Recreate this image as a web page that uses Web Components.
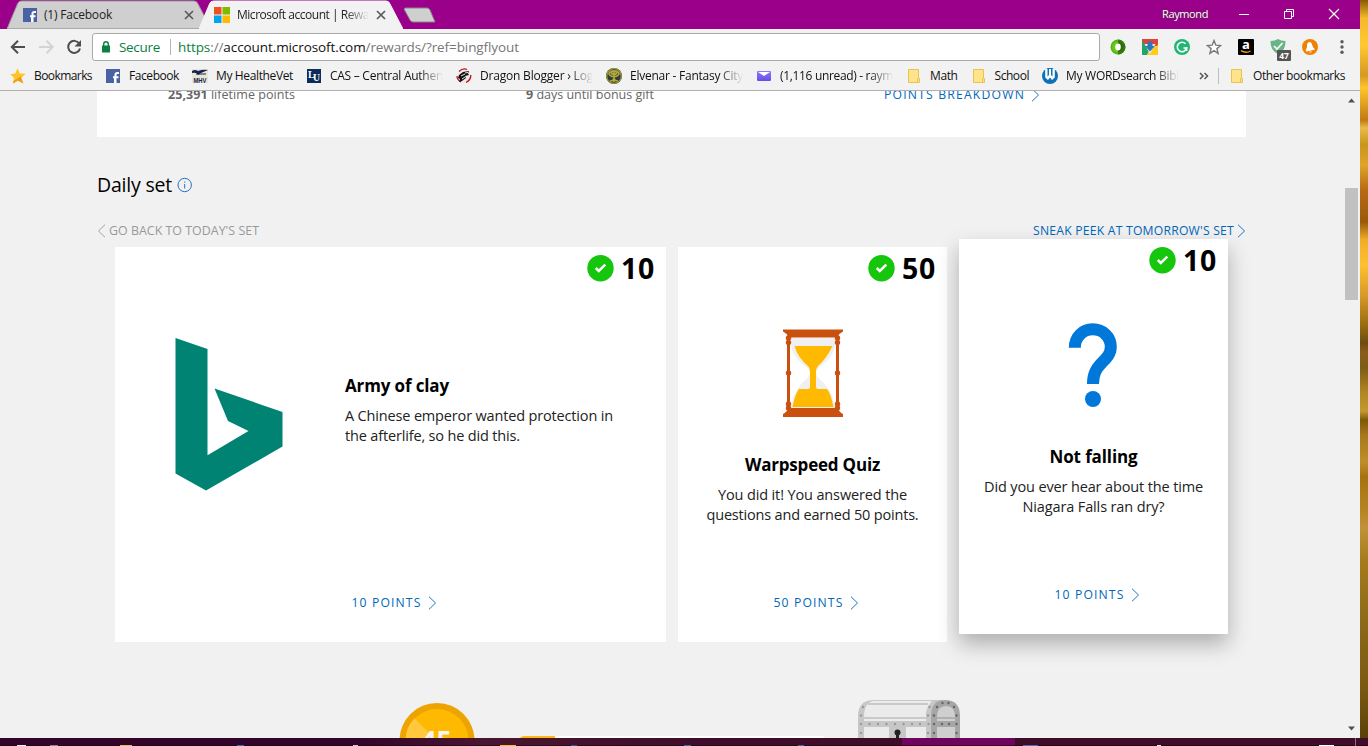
<!DOCTYPE html>
<html lang="en">
<head>
<meta charset="utf-8">
<title>Microsoft account | Rewards</title>
<style>
  html, body { margin: 0; height: 100%; overflow: hidden; }
  body { font-family: "Open Sans", "Noto Sans", sans-serif; background: #f1f1f1; }
</style>
</head>
<body>
<desktop-screen></desktop-screen>

<script>
const icons = {
  facebook: `<svg width="16" height="16" viewBox="0 0 16 16"><rect x="1" y="1" width="14" height="14" fill="#4862a3"/><path d="M10 15V9.500M14 5h-1.800q-1.700 0-1.700 1.800V15M8 9.300h5.500" fill="none" stroke="#fff" stroke-width="2"/></svg>`,
  microsoft: `<svg width="16" height="16" viewBox="0 0 16 16"><path fill="#f25022" d="M0 0h7.500v7.500H0z"/><path fill="#7fba00" d="M8.500 0H16v7.500H8.500z"/><path fill="#00a4ef" d="M0 8.500h7.500V16H0z"/><path fill="#ffb900" d="M8.500 8.500H16V16H8.500z"/></svg>`,
  star: `<svg width="16" height="16" viewBox="0 0 16 16"><path d="M7.500.3 9.700 5.500l6 .3-4.500 4 2.200 5.800-5.400-3.200L3 15.500l1-5.600L.3 6.300l5-.8z" fill="#fdc529"/><path d="M11 8l.2 2 2.200 5.600L8 12.400 3 15.500l.5-2.500 4.200-2.500z" fill="#f39a19"/></svg>`,
  mhv: `<svg width="16" height="16" viewBox="0 0 16 16"><rect y="1" width="16" height="14" fill="#e9e5d6"/><path d="M0 3q3-2 6 0 5-2 10-1L9 5 6 7Q5 4 0 5z" fill="#16234f"/><path d="M4 6h10" stroke="#16234f"/><text x="8" y="14.500" text-anchor="middle" textLength="13" lengthAdjust="spacingAndGlyphs" font-family="Liberation Sans" font-weight="700" font-size="6.500" fill="#16234f">MHV</text></svg>`,
  lu: `<svg width="16" height="16" viewBox="0 0 16 16"><rect x="1" y="1" width="14" height="14" fill="#0a2d5c"/><text x="2" y="10" font-family="Liberation Serif" font-weight="700" font-size="10" fill="#fff">L</text><text x="7" y="13" font-family="Liberation Serif" font-weight="700" font-size="10" textLength="7" lengthAdjust="spacingAndGlyphs" fill="#fff">U</text></svg>`,
  dragon: `<svg width="16" height="16" viewBox="0 0 16 16"><circle cx="8" cy="8" r="7" fill="#eceaea"/><path d="M3 3.500Q7-.5 11 1.500M14.800 7Q15 12 10 14.500M1 8q0 4 4 6" fill="none" stroke="#c2131d" stroke-width="1.300"/><path d="M3 7l4-3 6-1-1 2.500 1 1.500-4 1 1 2-4 3-3 1 1-3-2-1z" fill="#171013"/><path d="M5 8l4-2M6 11l3-2M9 5l3-.5" stroke="#eceaea"/></svg>`,
  tree: `<svg width="16" height="16" viewBox="0 0 16 16"><circle cx="8" cy="8" r="8" fill="#303c3c"/><path d="M8 3v11M8 9Q3 8 3 5M8 9q5-1 5-4M8 7Q5 6 5.500 3M8 7q3-1 2.500-4M8 11q-1 2-4 2M8 11q1 2 4 2M3 5q5-4 10 0" fill="none" stroke="#b4a83c" stroke-width="1.700"/><circle cx="8" cy="8" r="7.300" fill="none" stroke="#a39b3b" stroke-width="1.200"/></svg>`,
  mail: `<svg width="16" height="16" viewBox="0 0 16 16"><defs><linearGradient id="m" x2="0" y2="1"><stop stop-color="#8a7df5"/><stop offset="1" stop-color="#654be9"/></linearGradient></defs><rect x="1" y="3" width="14" height="10" rx="1" fill="url(#m)"/><path d="M2 4l6 4 6-4z" fill="#fff"/></svg>`,
  folder: `<svg width="16" height="16" viewBox="0 0 16 16"><path d="M2.500 1.500h10v9h1v4h-11z" fill="#ffe38d" stroke="#e8c44b"/><path d="M11.500 14v-3.500h1" fill="none" stroke="#e8c44b"/></svg>`,
  word: `<svg width="16" height="16" viewBox="0 0 16 16"><circle cx="8" cy="8" r="8" fill="#0e70b8"/><path d="M3.200 1h9.600v8.500L10 12 8 9.500 6 12 3.200 9.500z" fill="#fff"/><path d="M5.500 0v8.500l1.500-1.500V0zM10.500 0v8.500L9 7V0z" fill="#0e70b8"/></svg>`,
  back: `<svg width="16" height="16" viewBox="0 0 16 16"><path d="M15 8H2M8 1.800 1.800 8 8 14.200" fill="none" stroke="#4e4e4e" stroke-width="2"/></svg>`,
  forward: `<svg width="16" height="16" viewBox="0 0 16 16"><path d="M1 8h13M8.500 1.800 14.700 8l-6.200 6.200" fill="none" stroke="#d3d3d3" stroke-width="2"/></svg>`,
  reload: `<svg width="16" height="16" viewBox="0 0 16 16"><path d="M13.200 4.500A6 6 0 1 0 14 9.500" fill="none" stroke="#4e4e4e" stroke-width="2"/><path d="M15 1v6.500H8.500z" fill="#4e4e4e"/></svg>`,
  lock: `<svg width="10" height="12" viewBox="0 0 10 12"><rect x="1" y="4.500" width="8" height="7" fill="#0b8043"/><path d="M2.700 5V3a2.300 2.300 0 0 1 4.600 0v2" fill="none" stroke="#0b8043" stroke-width="1.400"/></svg>`,
  ring: `<svg width="16" height="16" viewBox="0 0 16 16"><circle cx="8" cy="8" r="7.500" fill="#56b312"/><path d="M8 .5a7.500 7.500 0 0 1 0 15z" fill="#347c0c"/><circle cx="7.500" cy="8" r="5.500" fill="#65c91a"/><path d="M8 2.500a5.500 5.500 0 0 1 0 11z" fill="#2f6a0e"/><ellipse cx="8" cy="8" rx="2.800" ry="3.400" fill="#fff"/></svg>`,
  download: `<svg width="16" height="16" viewBox="0 0 16 16"><path d="M0 0h16v7H0z" fill="#e04339"/><path d="M0 2l8 8-3 6H0z" fill="#23a566"/><path d="M16 6v10H5l4-6z" fill="#ffcd13"/><path d="M2.500 5 8 15l5.500-10z" fill="#e4edf3"/><path d="M5.500 2.500h5V7H13l-5 5.500L3 7h2.500z" fill="#2f76b7"/></svg>`,
  grammarly: `<svg width="16" height="16" viewBox="0 0 16 16"><circle cx="8" cy="8" r="8" fill="#22b573"/><path d="M11.500 4.800A4.700 4.700 0 1 0 12.600 9H9.500" fill="none" stroke="#fff" stroke-width="1.600"/><path d="M12.700 8v4" stroke="#fff" stroke-width="1.300"/></svg>`,
  outlineStar: `<svg width="16" height="16" viewBox="0 0 16 16"><path d="M8 1.600l1.800 4.600 4.900.3-3.800 3.100 1.200 4.800L8 11.700l-4.100 2.700 1.200-4.800-3.800-3.100 4.900-.3z" fill="#fff" stroke="#777" stroke-width="1.400"/></svg>`,
  amazon: `<svg width="16" height="16" viewBox="0 0 16 16"><rect width="16" height="16" rx="1" fill="#000"/><text x="8" y="10" text-anchor="middle" font-family="Open Sans" font-weight="700" font-size="13" fill="#fff">a</text><path d="M3 11.700q5 3 9.500.3" fill="none" stroke="#f39b1d" stroke-width="1.400"/></svg>`,
  shield: `<svg width="16" height="16" viewBox="0 0 16 16"><path d="M8 0q3 2 7.500 2Q16 11 8 15 0 11 .5 2 5 2 8 0z" fill="#69b684"/><path d="M4 7l3 3 5.500-6" fill="none" stroke="#fff" stroke-width="1.600"/></svg>`,
  bell: `<svg width="16" height="16" viewBox="0 0 16 16"><circle cx="8" cy="8" r="8" fill="#ef8205"/><path d="M6 3.500q3-1.500 4 2 .5 3 3 5L5 12.500Q3 12 4.300 10 5.500 8 5 5.500z" fill="#fff"/><path d="M7 13q2 1.500 3-.8" fill="#fff"/></svg>`,
  menu: `<svg width="16" height="16" viewBox="0 0 16 16"><g fill="#5a5a5a"><circle cx="8" cy="2.700" r="1.700"/><circle cx="8" cy="8" r="1.700"/><circle cx="8" cy="13.300" r="1.700"/></g></svg>`,
  close: `<svg width="10" height="10" viewBox="0 0 10 10"><path d="M1 1l8 8M9 1l-8 8" stroke="#5a5a5a" stroke-width="1.700"/></svg>`,
  minimize: `<svg width="12" height="12" viewBox="0 0 12 12"><path d="M1 6.500h10" stroke="#fff"/></svg>`,
  restore: `<svg width="12" height="12" viewBox="0 0 12 12"><path d="M1.500 3.500h7v7h-7zM3.500 3.500v-2h7v7h-2" fill="none" stroke="#fff"/></svg>`,
  closeWindow: `<svg width="12" height="12" viewBox="0 0 12 12"><path d="M1 1l10 10M11 1 1 11" stroke="#fff" stroke-width="1.200"/></svg>`,
  right: `<svg width="9" height="14" viewBox="0 0 9 14"><path d="M1 .7 7.500 7 1 13.300" fill="none" stroke="currentColor" stroke-width=".9"/></svg>`,
  left: `<svg width="9" height="14" viewBox="0 0 9 14"><path d="M8 .7 1.500 7 8 13.300" fill="none" stroke="currentColor" stroke-width=".9"/></svg>`,
  info: `<svg width="16" height="16" viewBox="0 0 16 16"><circle cx="7.700" cy="8" r="6.700" fill="none" stroke="#2672c0"/><path d="M7.700 7v4.500M7.700 4.500v1.200" stroke="#2672c0"/></svg>`,
  check: `<svg width="27" height="27" viewBox="0 0 27 27"><circle cx="13.500" cy="13.200" r="13.200" fill="#16c60c"/><path d="M8.800 13l3 3L18.300 9.700" fill="none" stroke="#fff" stroke-width="2.500"/></svg>`,
  bing: `<svg width="109" height="154" viewBox="0 0 109 154"><path d="M.5.100 32.500 11.100V117.200L73.500 93 53 83 39.500 50.500 107.500 74v34.500L31 152.500.5 135.500z" fill="#008373"/></svg>`,
  hourglass: `<svg width="60" height="88" viewBox="0 0 60 88">
    <path d="M8 9h44v8Q50 28 39 36q-6 5-6 8 0 4 7 9 10 10 12 26H8q2-16 12-26 7-5 7-9 0-3-6-8Q10 28 8 17z" fill="#f0f0f1"/>
    <path d="M11.500 17h38Q44 29 35 37q-2 2-2 5v16q0 2 2 2h9q4 5 6.500 18H9.500Q12 65 16 60h9q2 0 2-2V42q0-3-2-5Q15 29 11.500 17z" fill="#ffb900"/>
    <path d="M0 .5h60v2q-4 2-5 5v1H5v-1Q4 4.500 0 2.500zM5 79h50q1 4 5 6v3H0v-3q4-2 5-6z" fill="#ca5010"/>
    <path d="M5.500 9v70M54.500 9v70" stroke="#ca5010" stroke-width="3"/>
    <g fill="#ca5010"><circle cx="5.500" cy="9" r="2.700"/><circle cx="54.500" cy="9" r="2.700"/><circle cx="5.500" cy="13.500" r="2.700"/><circle cx="54.500" cy="13.500" r="2.700"/><circle cx="5.500" cy="44" r="2.700"/><circle cx="54.500" cy="44" r="2.700"/><circle cx="5.500" cy="75" r="2.700"/><circle cx="54.500" cy="75" r="2.700"/><circle cx="5.500" cy="79" r="2.700"/><circle cx="54.500" cy="79" r="2.700"/></g>
  </svg>`,
  question: `<svg width="60" height="88" viewBox="0 0 60 88"><path d="M10.800 26.800C10.800 15.800 18.800 8.300 28.800 8.300s18 7.500 18 17.500c0 7-4 11-8.500 15.500C32.500 47.300 29 52.300 29 63" fill="none" stroke="#0078d9" stroke-width="12"/><circle cx="29" cy="78" r="8" fill="#0078d9"/></svg>`,
  coin: `<svg width="76" height="76" viewBox="0 0 76 76"><circle cx="38" cy="37.500" r="37.500" fill="#eda300"/><circle cx="38" cy="37.500" r="31.500" fill="#ffb900"/><path d="M38 37.500 15.500 15.500A31.500 31.500 0 0 0 6.500 37.500z" fill="#ffc83d"/><text x="37.500" y="47" text-anchor="middle" textLength="31" font-family="Open Sans" font-weight="700" font-size="27" fill="#f4f4f4">45</text></svg>`,
  chest: `<svg width="103" height="50" viewBox="0 0 103 50">
    <path d="M0 50V16Q0 0 16 0h68v50z" fill="#c7c7c7"/>
    <path d="M6 50V17Q6 3 15 1h59q-6 6-6 15v34z" fill="#ebebeb"/>
    <path d="M10 4h60M6 18h62M6 44h62" stroke="#bebebe" stroke-width="1.500"/>
    <path d="M68 50V16q0-16 17-16v50z" fill="#c7c7c7"/>
    <path d="M73 50V16Q73 0 87 0q15 0 15 16v34z" fill="#a6a6a6"/>
    <path d="M79 50V17q0-11 9-11t9 11v33z" fill="#cfcfcf"/>
    <path d="M79 18h18M79 44h18" stroke="#a6a6a6" stroke-width="1.500"/>
    <path d="M0 21h73v6H0z" fill="#c7c7c7"/><path d="M73 21h29v6H73z" fill="#a6a6a6"/>
    <path d="M31 27h17v23H31z" fill="#c7c7c7"/>
    <g fill="#999"><circle cx="3" cy="24" r="1.200"/><circle cx="11.500" cy="24" r="1.200"/><circle cx="20" cy="24" r="1.200"/><circle cx="28.500" cy="24" r="1.200"/><circle cx="37" cy="24" r="1.200"/><circle cx="45.500" cy="24" r="1.200"/><circle cx="54" cy="24" r="1.200"/><circle cx="62" cy="24" r="1.200"/><circle cx="70.500" cy="24" r="1.200"/><circle cx="3" cy="15.500" r="1.200"/><circle cx="5" cy="7" r="1.200"/><circle cx="3" cy="33" r="1.200"/><circle cx="70" cy="15.500" r="1.200"/><circle cx="71.500" cy="7" r="1.200"/><circle cx="70" cy="33" r="1.200"/></g>
    <g fill="#666"><circle cx="76" cy="24" r="1.200"/><circle cx="84" cy="24" r="1.200"/><circle cx="91" cy="24" r="1.200"/><circle cx="98.500" cy="24" r="1.200"/><circle cx="76" cy="15.500" r="1.200"/><circle cx="98.500" cy="15.500" r="1.200"/><circle cx="79" cy="7" r="1.200"/><circle cx="84.500" cy="3" r="1.200"/><circle cx="90.500" cy="3" r="1.200"/><circle cx="96" cy="7" r="1.200"/><circle cx="76" cy="33" r="1.200"/><circle cx="98.500" cy="33" r="1.200"/></g>
    <circle cx="39.500" cy="32.500" r="3" fill="#222"/><path d="M38 33h3v7h-3z" fill="#222"/>
  </svg>`,
};

// shared base: every element fills its open shadow root from render()
class UiElement extends HTMLElement {
  constructor() {
    super();
    this.attachShadow({ mode: "open" });
  }

  connectedCallback() {
    this.shadowRoot.innerHTML = this.render();
  }
}

class UiIcon extends UiElement {
  render() {
    return `
      <style>
        :host { display: block; flex: none; line-height: 0; }
        svg { display: block; }
      </style>
      ${icons[this.getAttribute("name")]}
    `;
  }
}

// one line of text, tracked so that it fills the width in its attribute
class FitText extends UiElement {
  connectedCallback() {
    super.connectedCallback();
    const width = Number(this.getAttribute("width"));
    const length = this.textContent.length;
    const line = this.shadowRoot.querySelector("span");
    const natural = line.getBoundingClientRect().width;
    line.style.letterSpacing = `${(width - natural) / length}px`;
    this.style.width = `${width}px`;
  }

  render() {
    return `
      <style>
        :host { display: block; flex: none; white-space: nowrap; }
        :host([fade]) {
          -webkit-mask-image: linear-gradient(to left, transparent, #000 24px);
          mask-image: linear-gradient(to left, transparent, #000 24px);
        }
        span { display: inline-block; }
      </style>
      <span><slot></slot></span>
    `;
  }
}

class BrowserTab extends UiElement {
  render() {
    const active = this.hasAttribute("active");
    return `
      <style>
        :host { display: grid; width: 204px; height: 29px; flex: none; font-size: 12px; color: #222; }
        :host([active]) { margin-left: -12px; z-index: 1; }
        .shape, .content { grid-area: 1 / 1; }
        .content { display: flex; align-items: center; padding: 1px 0 0 15px; }
        fit-text { margin-left: 6px; line-height: 26px; }
        :host([active]) fit-text { margin-left: 7px; }
        .close { margin-left: auto; margin-right: 17px; }
      </style>
      <svg class="shape" width="204" height="29" viewBox="0 0 204 29">
        <path d="M0 29 10.500 4q1-3 4-3H187q3 0 4 3L204 29z" fill="${active ? "#f2f2f2" : "#cfcfcf"}" stroke="${active ? "#f2f2f2" : "#9c9c9c"}"/>
        ${active ? "" : `<path d="M0 28.500h204" stroke="#aaa"/>`}
      </svg>
      <div class="content">
        <ui-icon name="${this.getAttribute("icon")}"></ui-icon>
        <fit-text width="${this.getAttribute("text-width")}" ${active ? "fade" : ""}>${this.textContent}</fit-text>
        <ui-icon class="close" name="close"></ui-icon>
      </div>
    `;
  }
}

class TabStrip extends UiElement {
  render() {
    return `
      <style>
        :host { display: flex; height: 29px; background: #9b008a; box-sizing: border-box; padding-left: 7px; }
        .new { width: 34px; height: 16px; margin-top: 7px; }
        .user { margin-left: auto; margin-right: 30px; font-size: 11px; font-weight: 500; line-height: 28px; color: #fff; text-shadow: 0 0 3px #333; }
        .buttons { display: flex; align-items: center; gap: 33px; margin-right: 20px; height: 27px; }
      </style>
      <browser-tab icon="facebook" text-width="68">(1) Facebook</browser-tab>
      <browser-tab icon="microsoft" text-width="132" active>Microsoft account | Rewa</browser-tab>
      <svg class="new" viewBox="0 0 34 16"><path d="M2 1h22q2 0 3 2l5 12H10q-2 0-3-2L1 2z" fill="#cfcfcf" stroke="#858585"/></svg>
      <fit-text class="user" width="46">Raymond</fit-text>
      <div class="buttons">
        <ui-icon name="minimize"></ui-icon>
        <ui-icon name="restore"></ui-icon>
        <ui-icon name="closeWindow"></ui-icon>
      </div>
    `;
  }
}

class AddressBar extends UiElement {
  render() {
    return `
      <style>
        :host { display: flex; align-items: center; height: 36px; background: #f2f2f2; padding-left: 10px; }
        .nav { display: flex; gap: 12px; width: 82px; }
        .box {
          box-sizing: border-box; display: flex; align-items: center;
          width: 1008px; height: 28px; padding-left: 8px;
          background: #fff; border: 1px solid #a9a9a9; border-radius: 3px;
          font-size: 13.500px; line-height: 26px; color: #777;
        }
        .secure { margin-left: 8px; }
        .secure, .scheme { color: #0b8043; }
        .host { color: #111; }
        .divider { width: 1px; height: 16px; margin: 0 7px 0 10px; background: #b5b5b5; }
        .extensions { display: flex; padding-left: 2px; }
        .extensions > * { width: 32px; display: flex; justify-content: center; }
        .counted { position: relative; }
        .count {
          position: absolute; left: 15px; top: 11px; width: 14px; height: 11px;
          background: #555; border-radius: 1px; color: #fff;
          font: 700 8.500px/11px "Open Sans", sans-serif; text-align: center;
        }
      </style>
      <div class="nav">
        <ui-icon name="back"></ui-icon>
        <ui-icon name="forward"></ui-icon>
        <ui-icon name="reload"></ui-icon>
      </div>
      <div class="box">
        <ui-icon name="lock"></ui-icon>
        <fit-text class="secure" width="41">Secure</fit-text>
        <div class="divider"></div>
        <fit-text width="341"><span class="scheme">https</span>://<span class="host">account.microsoft.com</span>/rewards/?ref=bingflyout</fit-text>
      </div>
      <div class="extensions">
        <div><ui-icon name="ring"></ui-icon></div>
        <div><ui-icon name="download"></ui-icon></div>
        <div><ui-icon name="grammarly"></ui-icon></div>
        <div><ui-icon name="outlineStar"></ui-icon></div>
        <div><ui-icon name="amazon"></ui-icon></div>
        <div class="counted"><ui-icon name="shield"></ui-icon><span class="count">47</span></div>
        <div><ui-icon name="bell"></ui-icon></div>
        <div><ui-icon name="menu"></ui-icon></div>
      </div>
    `;
  }
}

const bookmarks = [
  { icon: "star", text: "Bookmarks", width: 58 },
  { icon: "facebook", text: "Facebook", width: 50 },
  { icon: "mhv", text: "My HealtheVet", width: 77 },
  { icon: "lu", text: "CAS – Central Authen", width: 113, fade: true },
  { icon: "dragon", text: "Dragon Blogger › Log", width: 113, fade: true },
  { icon: "tree", text: "Elvenar - Fantasy City", width: 113, fade: true },
  { icon: "mail", text: "(1,116 unread) - raym", width: 113, fade: true },
  { icon: "folder", text: "Math", width: 27.500 },
  { icon: "folder", text: "School", width: 34.500 },
  { icon: "word", text: "My WORDsearch Bibl", width: 113, fade: true },
];

class BookmarkItem extends UiElement {
  render() {
    return `
      <style>
        :host { display: flex; align-items: center; gap: 8px; flex: none; }
      </style>
      <ui-icon name="${this.getAttribute("icon")}"></ui-icon>
      <slot></slot>
    `;
  }
}

class BookmarksBar extends UiElement {
  render() {
    return `
      <style>
        :host {
          box-sizing: border-box; display: flex; align-items: center; gap: 13px;
          height: 26px; padding: 0 15px 4px 10px; background: #f2f2f2;
          border-bottom: 1px solid #b0b0b0;
          font-size: 12px; line-height: 20px; color: #111;
        }
        .more { margin-left: auto; margin-right: -4px; }
        .divider { width: 1px; height: 16px; background: #bdbdbd; margin-right: -3px; }
      </style>
      ${bookmarks
        .map(
          (b) =>
            `<bookmark-item icon="${b.icon}"><fit-text width="${b.width}" ${b.fade ? "fade" : ""}>${b.text}</fit-text></bookmark-item>`
        )
        .join("")}
      <svg class="more" width="10" height="8" viewBox="0 0 10 8"><path d="M1 1 4 4 1 7M5.500 1l3 3-3 3" fill="none" stroke="#555" stroke-width="1.500"/></svg>
      <div class="divider"></div>
      <bookmark-item icon="folder"><fit-text width="92">Other bookmarks</fit-text></bookmark-item>
    `;
  }
}

class ActionLink extends UiElement {
  render() {
    return `
      <style>
        :host { display: flex; align-items: center; gap: 7px; color: #0067b8; font-size: 12.200px; line-height: 20px; }
      </style>
      <slot></slot>
      <ui-icon name="right"></ui-icon>
    `;
  }
}

class PointsSummary extends UiElement {
  render() {
    return `
      <style>
        :host {
          box-sizing: border-box; display: flex; align-items: flex-start;
          height: 46px; margin: 0 97px; padding-left: 71px;
          background: #fff;
          font-size: 12.500px; line-height: 20px; color: #666;
        }
        :host > * { margin-top: -6px; }
        fit-text, action-link { margin-top: -6px; }
        action-link fit-text { margin-top: 0; }
        .bonus { margin-left: 231px; }
        action-link { margin-left: 230px; gap: 6px; }
      </style>
      <fit-text width="127"><b>25,391</b> lifetime points</fit-text>
      <fit-text class="bonus" width="128"><b>9</b> days until bonus gift</fit-text>
      <action-link><fit-text width="141">POINTS BREAKDOWN</fit-text></action-link>
    `;
  }
}

class OfferCard extends UiElement {
  render() {
    return `
      <style>
        :host {
          box-sizing: border-box; display: flex; flex-direction: column; align-items: center;
          width: 269px; height: 395px; background: #fff; flex: none;
        }
        :host([wide]) { width: 551px; }
        :host([raised]) { transform: translateY(-8px); box-shadow: 0 10px 20px rgba(0, 0, 0, 0.28); }
        .score {
          display: flex; align-items: center; align-self: flex-end; gap: 7px;
          height: 43px; padding-right: 11px; font-size: 28.500px; font-weight: 700; line-height: 43px; color: #000;
        }
        .body { display: flex; flex-direction: column; align-items: center; flex: 1; padding-top: 39px; }
        .text { display: flex; flex-direction: column; align-items: center; padding-top: 36px; }
        .title { font-size: 17px; font-weight: 700; line-height: 24px; color: #000; }
        .description { display: flex; flex-direction: column; align-items: inherit; margin-top: 8px; font-size: 14.500px; line-height: 20px; color: #222; }
        :host([wide]) .body { flex-direction: row; align-items: flex-start; align-self: stretch; padding: 48px 0 0 60px; gap: 61px; }
        :host([wide]) .text { align-items: flex-start; }
        action-link { height: 20px; margin-bottom: 29px; padding-left: 7px; gap: 6px; }
      </style>
      <div class="score">
        <ui-icon name="check"></ui-icon>
        <fit-text width="34">${this.getAttribute("points")}</fit-text>
      </div>
      <div class="body">
        <ui-icon name="${this.getAttribute("picture")}"></ui-icon>
        <div class="text">
          <div class="title"><slot name="title"></slot></div>
          <div class="description"><slot></slot></div>
        </div>
      </div>
      <action-link><fit-text width="70">${this.getAttribute("points")} POINTS</fit-text></action-link>
    `;
  }
}

class DailySet extends UiElement {
  render() {
    return `
      <style>
        :host { display: block; margin: 34px 97px 0; }
        .heading { display: flex; align-items: center; gap: 5px; height: 28px; font-size: 19.500px; line-height: 28px; color: #000; }
        .links { display: flex; align-items: center; justify-content: space-between; height: 20px; margin-top: 22px; line-height: 20px; font-size: 12.400px; }
        .back { display: flex; align-items: center; gap: 3px; color: #999; }
        .links ui-icon { margin-top: -1px; }
        .links action-link { gap: 3px; }
        .cards { display: flex; gap: 12px; margin: 6px 0 0 18px; }
      </style>
      <div class="heading"><fit-text width="75">Daily set</fit-text><ui-icon name="info"></ui-icon></div>
      <div class="links">
        <div class="back"><ui-icon name="left"></ui-icon><fit-text width="150">GO BACK TO TODAY'S SET</fit-text></div>
        <action-link><fit-text width="201">SNEAK PEEK AT TOMORROW'S SET</fit-text></action-link>
      </div>
      <div class="cards">
        <offer-card wide points="10" picture="bing">
          <fit-text slot="title" width="104">Army of clay</fit-text>
          <fit-text width="268">A Chinese emperor wanted protection in</fit-text>
          <fit-text width="175">the afterlife, so he did this.</fit-text>
        </offer-card>
        <offer-card points="50" picture="hourglass">
          <fit-text slot="title" width="135">Warpspeed Quiz</fit-text>
          <fit-text width="189">You did it! You answered the</fit-text>
          <fit-text width="212">questions and earned 50 points.</fit-text>
        </offer-card>
        <offer-card raised points="10" picture="question">
          <fit-text slot="title" width="88">Not falling</fit-text>
          <fit-text width="219">Did you ever hear about the time</fit-text>
          <fit-text width="142">Niagara Falls ran dry?</fit-text>
        </offer-card>
      </div>
    `;
  }
}

class StreakBar extends UiElement {
  render() {
    return `
      <style>
        :host { display: flex; align-items: flex-start; padding: 58px 0 0 399px; }
        .track { width: 307px; height: 12px; margin: 36px 32px 0 44px; border-radius: 5px; background: #fff; }
        .fill { width: 36px; height: 12px; border-radius: 5px 0 0 5px; background: #fdb813; }
        .coin { margin-top: 3px; }
      </style>
      <ui-icon class="coin" name="coin"></ui-icon>
      <div class="track"><div class="fill"></div></div>
      <ui-icon name="chest"></ui-icon>
    `;
  }
}

class PageScrollbar extends UiElement {
  render() {
    return `
      <style>
        :host { display: flex; flex-direction: column; align-items: center; width: 17px; background: #f1f1f1; }
        .thumb { width: 13px; height: 112px; margin: 85px 2px 0; background: #c1c1c1; }
        .up { margin-top: 7px; }
        .down { margin-top: auto; margin-bottom: 7px; }
      </style>
      <svg class="up" width="7" height="5" viewBox="0 0 7 5"><path d="M0 4.500 3.500.5 7 4.500z" fill="#505050"/></svg>
      <div class="thumb"></div>
      <svg class="down" width="7" height="5" viewBox="0 0 7 5"><path d="M0 .5l3.500 4 3.500-4z" fill="#505050"/></svg>
    `;
  }
}

const taskbarMarks = [
  [17, 9, "#eee"], [50, 8, "#9a7a92"], [120, 12, "#e5bd4b"], [237, 7, "#2074b6"],
  [353, 5, "#d8c2d2"], [500, 16, "#f1be2c"], [571, 6, "#255b94"], [684, 7, "#3d6a9e"],
  [798, 6, "#3d6a9e"], [1023, 15, "#4b6fae"], [1157, 4, "#eee"], [1319, 15, "#fff"],
];

class TaskBar extends UiElement {
  render() {
    const marks = taskbarMarks
      .map(([x, width, color]) => `<rect x="${x}" y="7" width="${width}" height="1" fill="${color}"/>`)
      .join("");
    return `
      <style>
        :host { display: block; height: 8px; background: linear-gradient(to right, #33052a 360px, #4a1530 480px, #3f0d29 700px, #400c27); }
        svg { display: block; }
      </style>
      <svg width="1368" height="8"><rect x="902" width="113" height="8" fill="#6e045c"/><path d="M0 7.500h1368" stroke="#1a0214" opacity=".6"/>${marks}<path d="M1355.500 0v8" stroke="#8b6b80"/></svg>
    `;
  }
}

class DesktopScreen extends UiElement {
  render() {
    return `
      <style>
        :host { display: flex; flex-direction: column; width: 1368px; height: 746px; overflow: hidden; }
        .desktop { display: flex; height: 738px; }
        .window { display: flex; flex-direction: column; width: 1360px; }
        .toolbars { z-index: 1; }
        .view { display: flex; height: 647px; background: #f1f1f1; }
        .page { width: 1343px; overflow: hidden; }
        .wallpaper {
          width: 8px;
          background: linear-gradient(#8a5a05, #f5b92b 18px, #ffc832 45px, #d59a22 75px, #ffc52a 88px, #c07a14 120px, #e8bc48 128px, #c8951a 145px, #e0a427 165px, #b86a14 190px, #995a0a 222px, #f0ae28 240px, #ffc030 265px, #d79b28 295px, #9a6c10 325px, #6c4c0e 343px, #8a5c1a 352px, #7c5c16 368px, #b08622 392px, #c49830 411px, #7c5a08 420px, #a87a1c 436px, #bd8e28 462px, #a5720f 477px, #b58422 510px, #c0923a 528px, #a57c1c 560px, #8c6a18 620px, #7a5812 690px, #5a4108);
        }
      </style>
      <div class="desktop">
        <div class="window">
          <div class="toolbars">
            <tab-strip></tab-strip>
            <address-bar></address-bar>
            <bookmarks-bar></bookmarks-bar>
          </div>
          <div class="view">
            <div class="page">
              <points-summary></points-summary>
              <daily-set></daily-set>
              <streak-bar></streak-bar>
            </div>
            <page-scrollbar></page-scrollbar>
          </div>
        </div>
        <div class="wallpaper"></div>
      </div>
      <task-bar></task-bar>
    `;
  }
}

customElements.define("ui-icon", UiIcon);
customElements.define("browser-tab", BrowserTab);
customElements.define("tab-strip", TabStrip);
customElements.define("address-bar", AddressBar);
customElements.define("bookmark-item", BookmarkItem);
customElements.define("bookmarks-bar", BookmarksBar);
customElements.define("action-link", ActionLink);
customElements.define("points-summary", PointsSummary);
customElements.define("offer-card", OfferCard);
customElements.define("daily-set", DailySet);
customElements.define("streak-bar", StreakBar);
customElements.define("page-scrollbar", PageScrollbar);
customElements.define("task-bar", TaskBar);
customElements.define("desktop-screen", DesktopScreen);
// text measures itself, so it goes last, once everything around it is styled
customElements.define("fit-text", FitText);
</script>
</body>
</html>
